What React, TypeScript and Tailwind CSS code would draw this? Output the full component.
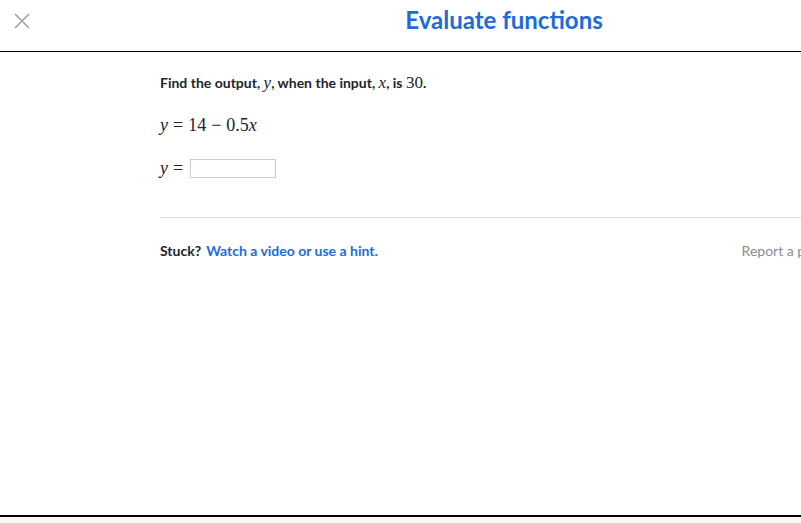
import React from "react";

function CloseIcon() {
  return (
    <svg width="16" height="16" viewBox="0 0 16 16" fill="none" stroke="#a3a3a3" strokeWidth="1.6">
      <path d="M1 1 L15 15 M15 1 L1 15" />
    </svg>
  );
}

function MathVar({ children }: { children: React.ReactNode }) {
  return <span className="italic">{children}</span>;
}

function Op({ children }: { children: React.ReactNode }) {
  return <span className="mx-[5px]">{children}</span>;
}

export default function App() {
  return (
    <div className="w-[801px] h-[523px] overflow-hidden bg-[#f7f7f7] font-['Lato',sans-serif] text-[#21242c]">
      <div className="h-[517px] bg-white border-b-2 border-black flex flex-col">
        <div className="h-[52px] shrink-0 border-b border-black flex">
          <div className="w-[160px] shrink-0 pl-[14px] pt-[13px]">
            <CloseIcon />
          </div>
          <div className="w-[688px] shrink-0 text-center pt-[4px] text-[24px] leading-[32px] font-bold text-[#1c6bdc]">
            Evaluate functions
          </div>
        </div>

        <div className="flex pl-[160px]">
          <div className="w-[688px] shrink-0">
            <p className="mt-[21px] text-[14px] leading-[20px] font-bold">
              Find the output,{" "}
              <span className="font-['Liberation_Serif',serif] text-[17px] italic font-normal">y</span>, when the
              input,{" "}
              <span className="font-['Liberation_Serif',serif] text-[17px] italic font-normal">x</span>, is{" "}
              <span className="font-['Liberation_Serif',serif] text-[17px] font-normal">30</span>.
            </p>

            <p className="mt-[22px] font-['Liberation_Serif',serif] text-[18px] leading-[20px]">
              <MathVar>y</MathVar>
              <Op>=</Op>14<Op>−</Op>0.5<MathVar>x</MathVar>
            </p>

            <div className="mt-[23px] flex items-center font-['Liberation_Serif',serif] text-[18px] leading-[20px]">
              <MathVar>y</MathVar>
              <span className="ml-[5px] mr-[7px]">=</span>
              <div className="w-[86px] h-[19px] border border-[#cccccc] bg-white" />
            </div>

            <div className="mt-[39px] h-px bg-[#dcdcdc]" />

            <div className="mt-[24px] flex justify-between text-[14px] leading-[18px]">
              <div className="flex gap-[5px] font-bold">
                <span>Stuck?</span>
                <span className="text-[#1c6bdc]">Watch a video or use a hint.</span>
              </div>
              <span className="text-[#888d93]">Report a problem</span>
            </div>
          </div>
        </div>
      </div>
    </div>
  );
}
